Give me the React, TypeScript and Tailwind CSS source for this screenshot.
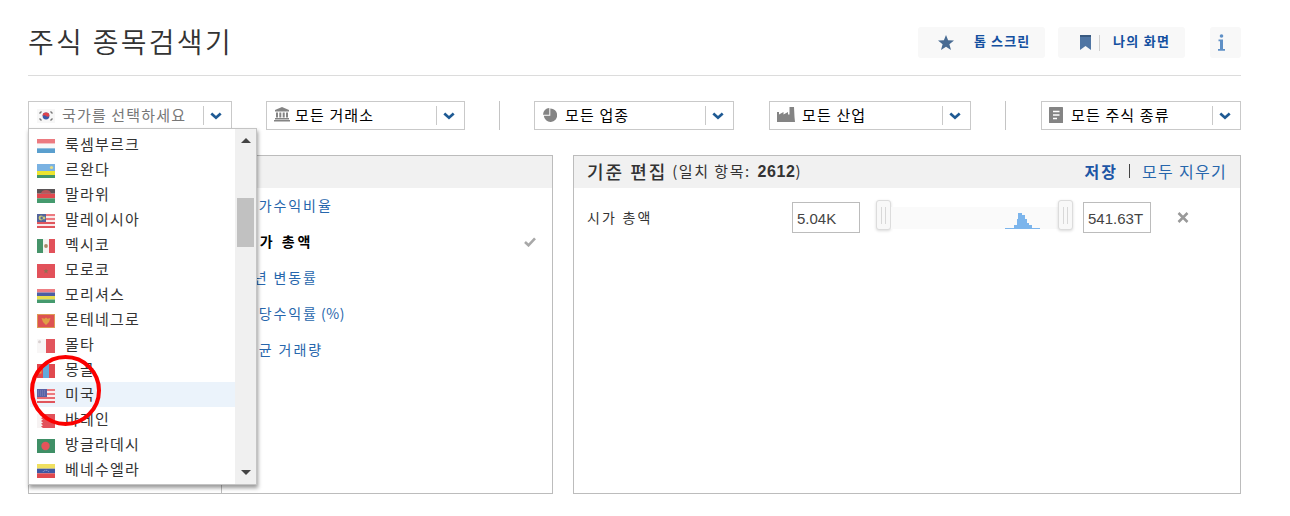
import React from 'react';

interface Country {
  name: string;
  flag: React.ReactNode;
}

const Stripes: React.FC<{ colors: string[]; vertical?: boolean }> = ({ colors, vertical }) => (
  <>
    {colors.map((c, i) => {
      const w = 18 / colors.length;
      const h = 14 / colors.length;
      return vertical ? (
        <rect key={i} x={i * w} y="0" width={w} height="14" fill={c} />
      ) : (
        <rect key={i} x="0" y={i * h} width="18" height={h} fill={c} />
      );
    })}
  </>
);

const countries: Country[] = [
  { name: '룩셈부르크', flag: <Stripes colors={['#ec7a80', '#f8f8f8', '#5a9fce']} /> },
  {
    name: '르완다',
    flag: (
      <>
        <rect width="18" height="7" fill="#7ab2e2" />
        <rect y="7" width="18" height="4" fill="#ece52f" />
        <rect y="11" width="18" height="3" fill="#42956a" />
        <circle cx="14.5" cy="3.5" r="1.6" fill="#e6dc80" />
      </>
    ),
  },
  {
    name: '말라위',
    flag: (
      <>
        <Stripes colors={['#5a5557', '#e0494f', '#459a6e']} />
        <path d="M4 4.500a5 3.500 0 0 1 10 0z" fill="#b9555a" />
      </>
    ),
  },
  {
    name: '말레이시아',
    flag: (
      <>
        <Stripes colors={['#ec7a80', '#f9e9e9', '#ec7a80', '#f9e9e9', '#e0555c', '#f9e9e9', '#e0555c']} />
        <rect width="9" height="8" fill="#52649c" />
        <circle cx="4" cy="4" r="2.4" fill="#c9c87a" />
        <circle cx="5" cy="4" r="1.6" fill="#52649c" />
        <circle cx="7" cy="4" r="1.4" fill="#c9c87a" />
      </>
    ),
  },
  {
    name: '멕시코',
    flag: (
      <>
        <Stripes vertical colors={['#46946a', '#f6f4f2', '#e2515a']} />
        <circle cx="9" cy="7" r="1.9" fill="#a88a68" />
      </>
    ),
  },
  {
    name: '모로코',
    flag: (
      <>
        <rect width="18" height="14" fill="#e2515a" />
        <path d="M9 4.500l.7 1.800h1.900l-1.500 1.200.6 1.900L9 8.300 7.300 9.400l.6-1.900-1.500-1.200h1.900z" fill="#8b7253" />
      </>
    ),
  },
  { name: '모리셔스', flag: <Stripes colors={['#ee7f84', '#4c5fa3', '#e8dd4e', '#459a6e']} /> },
  {
    name: '몬테네그로',
    flag: (
      <>
        <rect width="18" height="14" fill="#de9a55" />
        <rect x="1" y="1" width="16" height="12" fill="#dd5252" />
        <path d="M4.500 4l3 .8L9 3.500l1.500 1.300 3-.8-1.500 4-3 3-3-3z" fill="#dfa045" />
      </>
    ),
  },
  {
    name: '몰타',
    flag: (
      <>
        <rect width="9" height="14" fill="#f8f6f6" />
        <rect x="9" width="9" height="14" fill="#e2555d" />
        <circle cx="2.500" cy="2.800" r="1.500" fill="#d8d0d0" />
      </>
    ),
  },
  {
    name: '몽골',
    flag: (
      <>
        <Stripes vertical colors={['#e0494f', '#61aadb', '#e0494f']} />
        <path d="M2 9.500V6l1.200-2L4.500 6v3.500z" fill="#e3a344" />
      </>
    ),
  },
  {
    name: '미국',
    flag: (
      <>
        <Stripes colors={['#ec7a80', '#fbeeee', '#ec7a80', '#fbeeee', '#e86a70', '#fbeeee', '#e0555c']} />
        <rect width="10" height="8" fill="#5a62a5" />
        <path d="M1 2h8M1 4h8M1 6h8" stroke="#8f95c5" strokeWidth=".8" strokeDasharray="1 1" />
      </>
    ),
  },
  {
    name: '바레인',
    flag: (
      <>
        <rect width="18" height="14" fill="#e2515a" />
        <path d="M0 0h6L4 1.400l2 1.400-2 1.400 2 1.400L4 7l2 1.400-2 1.400 2 1.400-2 1.400L6 14H0z" fill="#f6f2f2" />
      </>
    ),
  },
  {
    name: '방글라데시',
    flag: (
      <>
        <rect width="18" height="14" fill="#3f8f66" />
        <circle cx="8.500" cy="7" r="4.200" fill="#e5535a" />
      </>
    ),
  },
  {
    name: '베네수엘라',
    flag: (
      <>
        <Stripes colors={['#f0e060', '#3f57a3', '#e0494f']} />
        <path d="M6 8a3.200 2.500 0 0 1 6 0" stroke="#aab4dc" fill="none" strokeDasharray="1 .8" />
      </>
    ),
  },
];

const criteria = [
  { name: '주가수익비율' },
  { name: '시가 총액', selected: true },
  { name: '1년 변동률' },
  { name: '주당수익률', suffix: '(%)' },
  { name: '평균 거래량' },
];

const KoreaFlag = () => (
  <svg width="18" height="14" viewBox="0 0 18 14" className="shrink-0">
    <rect width="18" height="14" fill="#f7f7f7" />
    <circle cx="9" cy="7" r="3.400" fill="#3b5ba9" />
    <path d="M5.600 7a3.400 3.400 0 0 1 6.800 0c-1.200 1.200-2.400.9-3.400 0s-2.400-.9-3.400 0z" fill="#e0434c" />
    <path d="M2.500 4.500l2-2M13.500 2.500l2 2M2.500 9.500l2 2M13.500 11.500l2-2" stroke="#777" strokeWidth="1.400" />
  </svg>
);

const BankIcon = () => (
  <svg width="16" height="15" viewBox="0 0 16 15" fill="#848484" className="-mt-[3px] shrink-0">
    <path d="M8 0l7 3v1.500H1V3z" />
    <path d="M2 5.500h2v5H2zM5.300 5.500h2v5h-2zM8.700 5.500h2v5h-2zM12 5.500h2v5h-2zM1 11h14v1.500H1zM0 13h16v1.500H0z" />
  </svg>
);

const PieIcon = () => (
  <svg width="14" height="14" viewBox="0 0 14 14" fill="#848484" className="-mt-0.5 shrink-0">
    <path d="M7.300.5A6.700 6.700 0 1 1 .8 7.800h6.500z" />
    <path d="M6.300 0v6.800H0A6.300 6.800 0 0 1 6.300 0z" />
  </svg>
);

const FactoryIcon = () => (
  <svg width="18" height="15" viewBox="0 0 18 15" fill="#848484" className="-mt-[3px] shrink-0">
    <path d="M0 15V5h2v2.500L6.500 5v2.500L11 5v2.500h1.500V0h4.500l.5 10 .5 5z" />
  </svg>
);

const DocIcon = () => (
  <svg width="14" height="16" viewBox="0 0 14 16" className="-mt-0.5 shrink-0">
    <rect width="14" height="16" rx=".5" fill="#848484" />
    <path d="M4 4.500h6.500M4 8h6.500M4 11.500h4" stroke="#fff" strokeWidth="1.300" />
  </svg>
);

const Chevron = () => (
  <svg width="12" height="8" viewBox="0 0 12 8" fill="none">
    <path d="M1.300 1.600L6 5.800l4.700-4.200" stroke="#1e5a94" strokeWidth="2.700" />
  </svg>
);

interface FilterSelectProps {
  icon: React.ReactNode;
  label: string;
  className: string;
  labelClass?: string;
  children?: React.ReactNode;
}

const FilterSelect: React.FC<FilterSelectProps> = ({ icon, label, className, labelClass = 'ml-[7px] text-black', children }) => (
  <div className={`relative flex h-[29px] items-center border border-[#c9c9c9] bg-white ${className}`}>
    {icon}
    <span className={`-mt-0.5 whitespace-nowrap text-[15px] leading-5 tracking-[1.15px] ${labelClass}`}>{label}</span>
    <span className="ml-auto flex h-[19px] w-[28px] items-center border-l border-[#c9c9c9] pl-1.5">
      <Chevron />
    </span>
    {children}
  </div>
);

const CountryMenu = () => (
  <div className="absolute -left-px top-[26px] z-10 flex h-[357px] w-[229px] border border-[#c4c4c4] bg-white shadow-[1px_3px_4px_rgba(0,0,0,0.4)]">
    <ul className="flex-1 pt-[3px] pl-px">
      {countries.map(({ name, flag }) => (
        <li key={name} className={`flex h-[25px] items-center pl-[7px] ${name === '미국' ? 'bg-[#ebf3fb]' : ''}`}>
          <svg width="18" height="14" viewBox="0 0 18 14" className="mt-[3px] shrink-0">
            {flag}
          </svg>
          <span className="-mt-0.5 ml-2.5 whitespace-nowrap text-[15px] leading-5 tracking-[1.2px] text-[#333]">{name}</span>
        </li>
      ))}
    </ul>
    <div className="flex w-[21px] flex-col items-center bg-[#f0f0f0] pt-[9px] pb-[9px]">
      <svg width="10" height="5" viewBox="0 0 10 5">
        <path d="M0 5l5-5 5 5z" fill="#444" />
      </svg>
      <div className="mt-[55px] h-[49px] w-[17px] bg-[#c1c1c1]" />
      <svg width="10" height="5" viewBox="0 0 10 5" className="mt-auto">
        <path d="M0 0l5 5 5-5z" fill="#444" />
      </svg>
    </div>
    <div className="absolute left-px top-[226px] h-[71px] w-[71px] rounded-full border-4 border-[#fb0000]" />
  </div>
);

const Divider = () => <div className="h-[29px] w-px bg-[#c4c4c4]" />;

const SliderHandle = () => (
  <div className="flex h-[30px] w-[15px] shrink-0 items-center justify-center gap-[3px] rounded-[3px] border border-[#dcdcdc] bg-[#f8f8f8] shadow-[0_1px_3px_rgba(0,0,0,0.15)]">
    <span className="h-[17px] w-px bg-[#d8d8d8]" />
    <span className="h-[17px] w-px bg-[#d8d8d8]" />
  </div>
);

const RangeInput: React.FC<{ value: string }> = ({ value }) => (
  <div className="flex h-[31px] w-[68px] items-center border border-[#bcbcbc] bg-white pt-[3px] pl-1 font-['Liberation_Sans',sans-serif] text-[15px] text-[#444]">
    {value}
  </div>
);

export default function App() {
  return (
    <div className="h-[516px] w-[1290px] overflow-hidden bg-white pt-[27px] pl-7 font-['Noto_Sans_CJK_KR',sans-serif] text-[#333]">
      <header className="flex h-[49px] w-[1213px] items-start border-b border-[#dcdcdc]">
        <h1 className="-mt-0.5 whitespace-nowrap text-[28px] font-[350] leading-8 tracking-[2.3px] text-[#333]">주식 종목검색기</h1>
        <div className="ml-auto flex text-[13px] font-bold leading-5 text-[#1450a0]">
          <button className="flex h-[31px] w-[127px] items-center rounded-[3px] bg-[#f8f8f8] pl-5">
            <svg width="16" height="15" viewBox="0 0 16 15">
              <path d="M8 0l2.100 5.200 5.900.3-4.600 3.700L13 15l-5-3.200L3 15l1.600-5.800L0 5.500l5.900-.3z" fill="#486b93" />
            </svg>
            <span className="-mt-[3px] ml-5 whitespace-nowrap tracking-[1.1px]">톱 스크린</span>
          </button>
          <button className="ml-[13px] flex h-[31px] w-[127px] items-center rounded-[3px] bg-[#f8f8f8] pl-[22px]">
            <svg width="11" height="15" viewBox="0 0 11 15">
              <path d="M0 0h11v15l-5.500-4L0 15z" fill="#4f75a3" />
              <path d="M0 0h11v2H0z" fill="#395a80" />
            </svg>
            <span className="ml-2 h-4 w-px bg-[#d0d0d0]" />
            <span className="-mt-[3px] ml-[13px] whitespace-nowrap tracking-[1.300px]">나의 화면</span>
          </button>
          <button className="ml-[25px] flex h-[31px] w-[31px] items-center rounded-[3px] bg-[#f8f8f8] pl-2">
            <svg width="7" height="17" viewBox="0 0 7 17" fill="#5f90c6">
              <circle cx="3.500" cy="2" r="1.800" />
              <path d="M.5 5.500h4.500v9.500H7v1.800H0V15h2V7.200H.5z" />
            </svg>
          </button>
        </div>
      </header>

      <div className="mt-[25px] flex w-[1213px]">
        <FilterSelect icon={<KoreaFlag />} label="국가를 선택하세요" className="w-[204px] pl-2" labelClass="ml-[7px] text-[#777]">
          <CountryMenu />
        </FilterSelect>
        <FilterSelect icon={<BankIcon />} label="모든 거래소" className="ml-[34px] w-[199px] pl-[7px]" labelClass="ml-[5px] text-black" />
        <div className="ml-[34px]"><Divider /></div>
        <FilterSelect icon={<PieIcon />} label="모든 업종" className="ml-[34px] w-[200px] pl-2" labelClass="ml-2 text-black" />
        <FilterSelect icon={<FactoryIcon />} label="모든 산업" className="ml-[35px] w-[202px] pl-[7px]" />
        <div className="ml-[34px]"><Divider /></div>
        <FilterSelect icon={<DocIcon />} label="모든 주식 종류" className="ml-[35px] w-[200px] pl-[7px]" labelClass="ml-2 text-black" />
      </div>

      <main className="mt-[25px] flex h-[339px] gap-5">
        <section className="flex w-[525px] flex-col border border-[#bcbcbc]">
          <div className="h-8 shrink-0 bg-[#f1f1f1]" />
          <div className="flex flex-1">
            <div className="w-[193px] border-r border-[#bcbcbc]" />
            <ul className="flex-1">
              {criteria.map(({ name, selected, suffix }) => (
                <li
                  key={name}
                  className={`flex h-9 items-center pr-4 pl-[22px] text-[14px] ${selected ? 'font-bold tracking-[2.9px] text-black' : 'tracking-[1.9px] text-[#2766ac]'}`}
                >
                  <span className="-mt-0.5">{name}</span>
                  {suffix && <span className="-mt-0.5 ml-[3px] tracking-[0.6px]">{suffix}</span>}
                  {selected && (
                    <svg width="12" height="10" viewBox="0 0 12 10" fill="none" className="ml-auto">
                      <path d="M1 5l3.500 3.300L11 1.300" stroke="#a8a8a8" strokeWidth="2.600" />
                    </svg>
                  )}
                </li>
              ))}
            </ul>
          </div>
        </section>

        <section className="w-[668px] border border-[#bcbcbc]">
          <div className="flex h-8 items-center bg-[#f1f1f1] pr-[13px] pl-[13px]">
            <h2 className="-mt-0.5 whitespace-nowrap text-[18px] font-medium tracking-[2px] text-[#333]">기준 편집</h2>
            <span className="ml-[5px] whitespace-nowrap text-[15px] tracking-[1.5px]">
              (일치 항목:{' '}
              <b className="ml-0.5 font-['Liberation_Sans',sans-serif] text-[16px] font-bold tracking-[0.6px]">2612</b>)
            </span>
            <div className="-mt-0.5 ml-auto flex items-center whitespace-nowrap text-[16px] text-[#2766ac]">
              <span className="font-bold tracking-[2px] text-[#1c55a5]">저장</span>
              <span className="ml-[11px] h-3.5 w-px bg-[#444]" />
              <span className="ml-3 tracking-[1.300px]">모두 지우기</span>
            </div>
          </div>
          <div className="flex items-start pt-3.5 pl-[13px]">
            <span className="w-[205px] text-[14px] leading-[30px] tracking-[2.200px]">시가 총액</span>
            <RangeInput value="5.04K" />
            <div className="-mt-0.5 ml-4 flex w-[197px] items-center">
              <SliderHandle />
              <div className="mt-1.5 flex h-[22px] flex-1 items-end justify-end bg-[#fafafa] pr-[18px]">
                <svg width="35" height="16" viewBox="0 0 35 16">
                  <path d="M0 16v-1h9v-3h3V6h1V0h4v2h3v4h2v4h2v2h3v3h8v1z" fill="#7cb5ec" />
                </svg>
              </div>
              <SliderHandle />
            </div>
            <div className="ml-2.5">
              <RangeInput value="541.63T" />
            </div>
            <svg width="12" height="11" viewBox="0 0 12 11" className="mt-2.5 ml-[26px]">
              <path d="M1.500 1l9 9M10.500 1l-9 9" stroke="#999" strokeWidth="2.500" />
            </svg>
          </div>
        </section>
      </main>
    </div>
  );
}
